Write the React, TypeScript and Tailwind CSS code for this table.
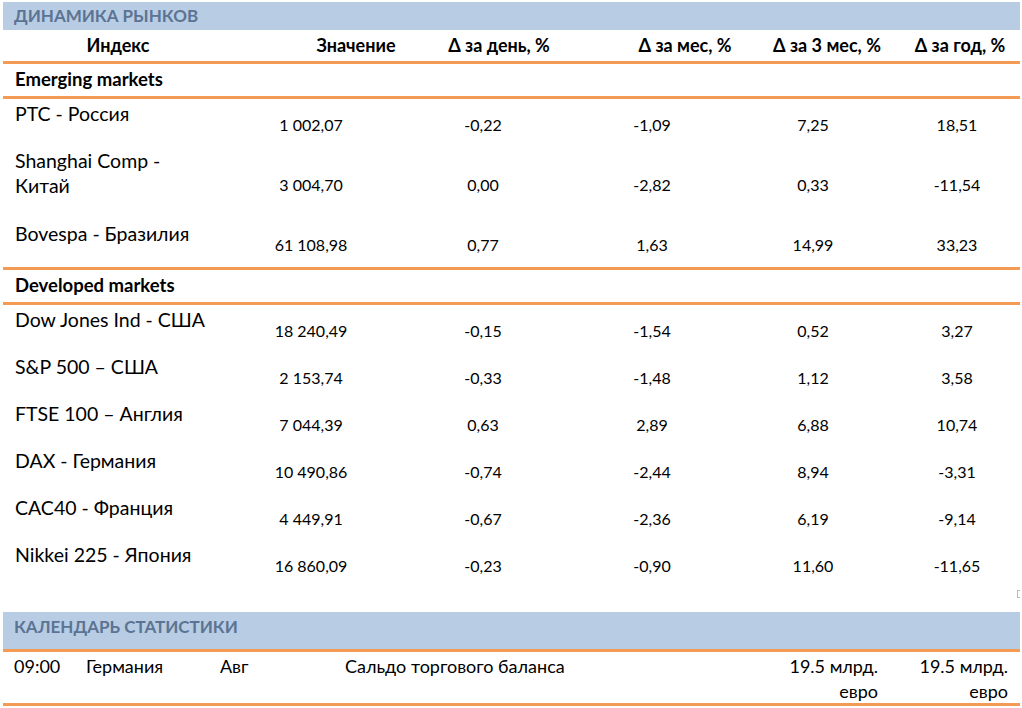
import React from "react";

type Row = { name: string[]; v: string[] };

const emerging: Row[] = [
  { name: ["РТС - Россия"], v: ["1 002,07", "-0,22", "-1,09", "7,25", "18,51"] },
  { name: ["Shanghai Comp -", "Китай"], v: ["3 004,70", "0,00", "-2,82", "0,33", "-11,54"] },
  { name: ["Bovespa - Бразилия"], v: ["61 108,98", "0,77", "1,63", "14,99", "33,23"] },
];

const developed: Row[] = [
  { name: ["Dow Jones Ind - США"], v: ["18 240,49", "-0,15", "-1,54", "0,52", "3,27"] },
  { name: ["S&P 500 – США"], v: ["2 153,74", "-0,33", "-1,48", "1,12", "3,58"] },
  { name: ["FTSE 100 – Англия"], v: ["7 044,39", "0,63", "2,89", "6,88", "10,74"] },
  { name: ["DAX - Германия"], v: ["10 490,86", "-0,74", "-2,44", "8,94", "-3,31"] },
  { name: ["CAC40 - Франция"], v: ["4 449,91", "-0,67", "-2,36", "6,19", "-9,14"] },
  { name: ["Nikkei 225 - Япония"], v: ["16 860,09", "-0,23", "-0,90", "11,60", "-11,65"] },
];

function Line() {
  return <div className="h-[3px] bg-[#f39a55]" />;
}

function DataRow({ row, h }: { row: Row; h: string }) {
  return (
    <div className={`flex ${h}`}>
      <div className="w-[258px] pl-[12px] pt-[2px] text-[19.5px] leading-[25px] whitespace-nowrap">
        {row.name.map((n, i) => (
          <div key={i}>{n}</div>
        ))}
      </div>
      <div className="flex items-center pt-[4px] text-[16px] leading-[20px]">
        <div className="w-[100px] text-center">{row.v[0]}</div>
        <div className="w-[100px] ml-[72px] text-center">{row.v[1]}</div>
        <div className="w-[100px] ml-[69px] text-center">{row.v[2]}</div>
        <div className="w-[100px] ml-[61px] text-center">{row.v[3]}</div>
        <div className="w-[100px] ml-[44px] text-center">{row.v[4]}</div>
      </div>
    </div>
  );
}

export default function App() {
  return (
    <div className="w-[1022px] h-[708px] overflow-hidden bg-white text-black font-['Lato',sans-serif] pl-[3px] pr-[2px] pt-[2px]">
      <div className="h-[28px] bg-[#b8cce4] pl-[11px] flex items-center text-[17px] font-bold text-[#5b7493]">
        ДИНАМИКА РЫНКОВ
      </div>
      <div className="h-[31px] flex items-center text-[18px] font-bold whitespace-nowrap">
        <div className="w-[230px] text-center">Индекс</div>
        <div className="w-[120px] ml-[63px] text-center">Значение</div>
        <div className="w-[130px] ml-[18px] text-center">Δ за день, %</div>
        <div className="w-[110px] ml-[66px] text-center">Δ за мес, %</div>
        <div className="w-[120px] ml-[27px] text-center">Δ за 3 мес, %</div>
        <div className="w-[100px] ml-[23px] text-center">Δ за год, %</div>
      </div>
      <Line />
      <div className="h-[32px] pl-[12px] flex items-center text-[18.5px] font-bold">Emerging markets</div>
      <Line />
      <DataRow row={emerging[0]} h="h-[47px]" />
      <DataRow row={emerging[1]} h="h-[73px]" />
      <DataRow row={emerging[2]} h="h-[48px]" />
      <Line />
      <div className="h-[32px] pl-[12px] flex items-center text-[18.5px] font-bold">Developed markets</div>
      <Line />
      {developed.map((r, i) => (
        <DataRow key={i} row={r} h="h-[47px]" />
      ))}
      <div className="h-[25px] flex justify-end items-start">
        <div className="mt-[3px] w-[3px] h-[8px] border border-[#bbbbbb] border-r-0" />
      </div>
      <div className="h-[37px] bg-[#b8cce4] pl-[11px] pt-[4px] text-[17px] font-bold text-[#5b7493] leading-[22px]">
        КАЛЕНДАРЬ СТАТИСТИКИ
      </div>
      <Line />
      <div className="h-[51px] flex text-[18px] leading-[25px] pt-[2px] whitespace-nowrap">
        <div className="w-[72px] pl-[11px]">09:00</div>
        <div className="w-[134px] pl-[11px]">Германия</div>
        <div className="w-[125px] pl-[11px]">Авг</div>
        <div className="w-[385px] pl-[11px]">Сальдо торгового баланса</div>
        <div className="w-[159px] text-right">
          <div>19.5 млрд.</div>
          <div>евро</div>
        </div>
        <div className="w-[130px] text-right">
          <div>19.5 млрд.</div>
          <div>евро</div>
        </div>
      </div>
      <Line />
    </div>
  );
}
